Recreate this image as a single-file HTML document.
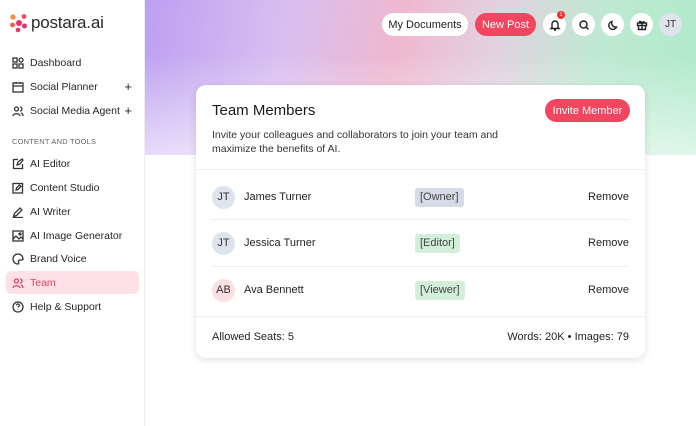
<!DOCTYPE html>
<html><head><meta charset="utf-8"><style>
*{box-sizing:border-box;margin:0;padding:0}
body{width:696px;height:426px;overflow:hidden;background:#fff;font-family:"Liberation Sans",sans-serif;color:#1f1f23;position:relative}
.side{position:absolute;left:0;top:0;width:145px;height:426px;border-right:1px solid #eee;background:#fff}
.logo{position:absolute;left:9px;top:13px;font-size:17px;color:#2a2a2e;display:flex;align-items:center;gap:2px;letter-spacing:-.2px}
.nav{position:absolute;left:6px;width:133px;height:23px;display:flex;align-items:center;font-size:10.5px;color:#26262b;padding-left:6px}
.nav svg{width:12px;height:12px;margin-right:6px;stroke:#333;fill:none;stroke-width:1.3}
.nav .plus{position:absolute;right:7px;font-size:13px}
.sec{position:absolute;left:12px;top:137px;font-size:7.5px;color:#666;letter-spacing:.2px}
.banner{position:absolute;left:145px;top:0;width:551px;height:155px;background:linear-gradient(100deg,#bc9ff2 0%,#d8bff0 25%,#efb8cf 45%,#e2d2e0 62%,#bfe9d2 80%,#aeeac9 100%)}
.banner:after{content:"";position:absolute;inset:0;background:linear-gradient(180deg,rgba(255,255,255,0) 35%,rgba(255,255,255,.6) 100%)}
.btn{position:absolute;top:13px;height:23px;border-radius:12px;font-size:11px;display:flex;align-items:center;justify-content:center}
.ic{position:absolute;top:13px;width:23px;height:23px;border-radius:50%;background:#fff;display:flex;align-items:center;justify-content:center}
.ic svg{width:12px;height:12px;fill:none;stroke:#222;stroke-width:1.4}
.card{position:absolute;left:196px;top:85px;width:449px;height:273px;background:#fff;border-radius:10px;box-shadow:0 2px 8px rgba(0,0,0,.12)}
.row{position:absolute;left:16px;width:417px;height:46px;display:flex;align-items:center;font-size:11px}
.av{width:23px;height:23px;border-radius:50%;background:#dfe3ec;display:flex;align-items:center;justify-content:center;font-size:11px;line-height:23px;color:#333;margin-right:9px}
.tag{position:absolute;left:203px;height:19px;padding:0 5px;border-radius:3px;display:flex;align-items:center;font-size:11px;color:#444}
.rm{position:absolute;right:0}
.hr{position:absolute;left:16px;width:417px;height:1px;background:#eee}
</style></head><body>
<div class="side">
<div class="logo"><svg width="20" height="20" viewBox="0 0 20 20"><circle cx="10" cy="10" r="3" fill="#f0306a"/><circle cx="4" cy="4" r="2.6" fill="#f78a3c"/><circle cx="15" cy="3.5" r="2.4" fill="#f04a5a"/><circle cx="3.5" cy="12" r="2.4" fill="#f55a55"/><circle cx="15.5" cy="13" r="2.5" fill="#e8306a"/><circle cx="9" cy="17" r="2.3" fill="#f0306a"/></svg>postara.ai</div>
<div class="nav" style="top:51px"><svg viewBox="0 0 12 12"><rect x="1" y="1" width="4" height="4"/><rect x="7" y="1" width="4" height="4" rx="2"/><rect x="1" y="7" width="4" height="4"/><rect x="7" y="7" width="4" height="4"/></svg>Dashboard</div>
<div class="nav" style="top:75px"><svg viewBox="0 0 12 12"><rect x="1" y="2" width="10" height="9"/><path d="M1 5h10M4 1v2M8 1v2"/></svg>Social Planner<span class="plus">+</span></div>
<div class="nav" style="top:99px"><svg viewBox="0 0 12 12"><circle cx="4.5" cy="4" r="2"/><path d="M1 11c0-3 7-3 7 0M8 2a2 2 0 010 4M9 8c2 .5 2 2 2 3"/></svg>Social Media Agent<span class="plus">+</span></div>
<div class="sec">CONTENT AND TOOLS</div>
<div class="nav" style="top:152px"><svg viewBox="0 0 12 12"><path d="M6 1.5H1.5v9h9V6M5 7l1-3 4-3 1 1-3 4z"/></svg>AI Editor</div>
<div class="nav" style="top:176px"><svg viewBox="0 0 12 12"><rect x="1" y="1.5" width="9.5" height="9.5"/><path d="M4 8l.5-2 3-3 1.5 1.5-3 3z"/></svg>Content Studio</div>
<div class="nav" style="top:200px"><svg viewBox="0 0 12 12"><path d="M1.5 10.5l1-3L8 2l2 2-5.5 5.5zM1 11.5h10"/></svg>AI Writer</div>
<div class="nav" style="top:224px"><svg viewBox="0 0 12 12"><rect x="1" y="1" width="10" height="10"/><path d="M1 9l3-3 3 3 2-2 2 2"/><circle cx="8" cy="4" r="1"/></svg>AI Image Generator</div>
<div class="nav" style="top:247px"><svg viewBox="0 0 12 12"><path d="M6 1a5 5 0 100 10c1 0 1-1 .5-2s0-2 1.5-2h2a1 1 0 001-1A5 5 0 006 1z"/></svg>Brand Voice</div>
<div class="nav" style="top:271px;background:#fde1e6;border-radius:5px;color:#e0435e"><svg viewBox="0 0 12 12" style="stroke:#e0435e"><circle cx="4.5" cy="4" r="2"/><path d="M1 11c0-3 7-3 7 0M8 2a2 2 0 010 4M9 8c2 .5 2 2 2 3"/></svg>Team</div>
<div class="nav" style="top:295px"><svg viewBox="0 0 12 12"><circle cx="6" cy="6" r="5"/><path d="M4.5 4.5a1.5 1.5 0 113 0c0 1-1.5 1-1.5 2M6 8.5v.5"/></svg>Help &amp; Support</div>
</div>
<div class="banner"></div>
<div class="btn" style="left:382px;width:86px;background:#fff;color:#222">My Documents</div>
<div class="btn" style="left:475px;width:61px;background:#f2455f;color:#fff">New Post</div>
<div class="ic" style="left:543px"><svg viewBox="0 0 12 12"><path d="M3 8.5V5a3 3 0 016 0v3.5l1 1H2zM5 11h2"/></svg><div style="position:absolute;left:14px;top:-2px;width:8px;height:8px;border-radius:50%;background:#e33;color:#fff;font-size:5px;text-align:center;line-height:8px">1</div></div>
<div class="ic" style="left:572px"><svg viewBox="0 0 12 12"><circle cx="5.5" cy="5.5" r="3.5"/><path d="M8 8l2.5 2.5"/></svg></div>
<div class="ic" style="left:601px"><svg viewBox="0 0 12 12"><path d="M9.5 8A4 4 0 015 2.5a4 4 0 104.5 5.5z"/></svg></div>
<div class="ic" style="left:630px"><svg viewBox="0 0 12 12"><rect x="1.5" y="4" width="9" height="2.5"/><path d="M2.5 6.5v4h7v-4M6 4v6.5M6 4C5 2 3 2 3.5 3.2S6 4 6 4c0 0 2 -2 2.5-.8S7 4 6 4"/></svg></div>
<div class="ic" style="left:659px;background:#dfe3ec;font-size:10px;color:#333">JT</div>
<div class="card">
<div style="position:absolute;left:16px;top:17px;font-size:15px;color:#1a1a1e">Team Members</div>
<div style="position:absolute;left:349px;top:14px;width:85px;height:23px;border-radius:12px;background:#f2455f;color:#fff;font-size:11px;display:flex;align-items:center;justify-content:center">Invite Member</div>
<div style="position:absolute;left:16px;top:43px;font-size:10.5px;line-height:14px;color:#333">Invite your colleagues and collaborators to join your team and<br>maximize the benefits of AI.</div>
<div style="position:absolute;left:0;top:84px;width:449px;height:1px;background:#eee"></div>
<div class="row" style="top:89px"><div class="av">JT</div>James Turner<div class="tag" style="background:#d5dbe7">[Owner]</div><span class="rm">Remove</span></div>
<div class="hr" style="top:134px"></div>
<div class="row" style="top:135px"><div class="av">JT</div>Jessica Turner<div class="tag" style="background:#d3efd9">[Editor]</div><span class="rm">Remove</span></div>
<div class="hr" style="top:181px"></div>
<div class="row" style="top:182px"><div class="av" style="background:#fbdfe2">AB</div>Ava Bennett<div class="tag" style="background:#d3efd9">[Viewer]</div><span class="rm">Remove</span></div>
<div style="position:absolute;left:0;top:231px;width:449px;height:1px;background:#eee"></div>
<div style="position:absolute;left:16px;top:246px;font-size:11px">Allowed Seats: 5</div>
<div style="position:absolute;right:16px;top:246px;font-size:11px">Words: 20K • Images: 79</div>
</div>
</body></html>
